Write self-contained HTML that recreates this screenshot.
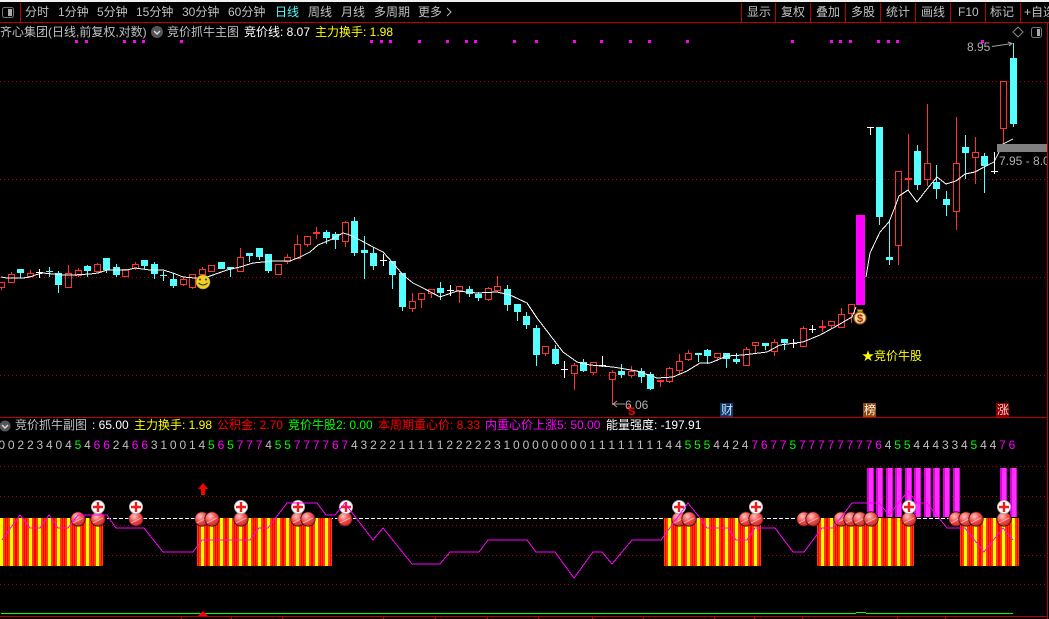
<!DOCTYPE html>
<html><head><meta charset="utf-8"><style>
html,body{margin:0;padding:0;background:#000;width:1049px;height:619px;overflow:hidden}
body{position:relative;font:12px/14px "Liberation Sans","WenQuanYi Zen Hei","Noto Sans CJK SC",sans-serif;color:#c0c0c0}
svg{position:absolute;left:0;top:0}
.t{position:absolute;white-space:nowrap}
.w{color:#fff}.y{color:#ff0}.r{color:#f00}.g{color:#0f0}.m{color:#f0f}.c{color:#54ffff}
#d{position:absolute;left:-3.07px;top:438px;display:flex;white-space:nowrap}
#d i{font-style:normal;width:9.543px;text-align:center;flex:none}
#d i.n{color:#0f0}#d i.m{color:#f0f}
</style></head><body>
<svg id="s" width="1049" height="619" viewBox="0 0 1049 619" shape-rendering="crispEdges">
<defs>
<radialGradient id="b" cx=".38" cy=".32" r=".8"><stop offset="0" stop-color="#ffc8c0"/><stop offset=".45" stop-color="#f05050"/><stop offset="1" stop-color="#c01818"/></radialGradient>
<radialGradient id="p" cx=".5" cy=".5" r=".5"><stop offset="0" stop-color="#fff"/><stop offset=".8" stop-color="#fff"/><stop offset="1" stop-color="#999"/></radialGradient>
</defs>
<rect x="0" y="0" width="1049" height="2" fill="#f0f0f0"/>
<g fill="#c00000">
<rect x="0" y="22" width="1049" height="1"/><rect x="20" y="3" width="1" height="19"/>
<rect x="741" y="3" width="1" height="19"/><rect x="775" y="3" width="1" height="19"/><rect x="810" y="3" width="1" height="19"/><rect x="845" y="3" width="1" height="19"/><rect x="880" y="3" width="1" height="19"/><rect x="915" y="3" width="1" height="19"/><rect x="950" y="3" width="1" height="19"/><rect x="985" y="3" width="1" height="19"/><rect x="1020" y="3" width="1" height="19"/>
<rect x="0" y="417" width="1048" height="1"/><rect x="0" y="616" width="1048" height="1"/><rect x="1047" y="22" width="1" height="597"/>
</g>
<g stroke="#b00000" stroke-dasharray="1 3" fill="none">
<path d="M0 81.5H1047M0 179.5H1047M0 277.5H1047M0 375.5H1047M0 466.5H1047M0 496.5H1047M0 525.5H1047M0 555.5H1047M0 584.5H1047"/>
</g>
<g id="sq" fill="#f0f"></g>
<g id="cd"></g>
<polyline fill="none" stroke="#fff" points="1,277 7,278 23,278 30,277 35,275 43,273 53,274 63,275 73,275 90,274 98,273 107,270 127,270 135,268 150,270 163,270 173,273 183,277 195,278 207,277 213,275 227,270 240,267 253,263 273,261 290,261 300,257 310,252 318,245 330,240 343,233 350,235 360,240 373,247 383,252 393,263 403,275 413,283 423,288 440,297 457,291 477,293 497,292 510,295 527,303 537,318 550,335 563,352 577,362 590,365 613,367 637,371 657,378 673,377 687,371 700,363 710,363 727,356 743,355 767,352 780,345 803,342 820,335 833,328 852,317 856,307"/>
<polyline fill="none" stroke="#fff" points="866,277 870,253 880,232 889,222 895,207 899,196 908,190 917,202 927,189 937,177 946,184 956,181 965,174 975,172 984,167 994,162 1003,144 1013,139"/>
<path d="M107 518.500H1000" stroke="#fff" stroke-dasharray="4 2" fill="none"/>
<g id="sub"></g>
<g id="blk"></g>
<g id="bal" shape-rendering="auto"></g>
<polyline fill="none" stroke="#f0f" points="2,540 20,515 30,528 40,528 49,515 58,528 68,528 78,515 87,515 107,515 116,528 144,528 163,552 193,552 202,540 250,540 259,528 268,528 287,503 317,503 326,515 335,515 345,503 350,510 373,540 383,528 412,564 440,564 450,552 479,552 488,540 527,540 536,552 555,552 574,578 593,552 602,552 612,564 632,540 661,540 688,503 700,518 707,528 728,528 736,540 747,540 755,528 775,528 793,552 804,552 822,528 833,528 852,503 879,503 889,515 908,491 917,503 927,503 947,528 965,528 984,552 1003,528 1013,540"/>
<g fill="#0f0"><rect x="1" y="613" width="855" height="1"/><rect x="856" y="612" width="10" height="1"/><rect x="866" y="613" width="147" height="1"/></g>
<path d="M203 611l5 5h-10z" fill="#f00" shape-rendering="auto"/>
<path d="M203 483l5 6h-3v6h-4v-6h-3z" fill="#f00" shape-rendering="auto"/>
<g fill="#c00000"><rect x="181" y="617" width="1" height="2"/><rect x="231" y="617" width="1" height="2"/><rect x="282" y="617" width="1" height="2"/><rect x="383" y="617" width="1" height="2"/><rect x="435" y="617" width="1" height="2"/><rect x="487" y="617" width="1" height="2"/><rect x="538" y="617" width="1" height="2"/><rect x="592" y="617" width="1" height="2"/><rect x="643" y="617" width="1" height="2"/><rect x="714" y="617" width="1" height="2"/><rect x="754" y="617" width="1" height="2"/><rect x="802" y="617" width="1" height="2"/><rect x="897" y="617" width="1" height="2"/><rect x="945" y="617" width="1" height="2"/></g>
<g shape-rendering="auto">
<rect x="2.500" y="7.500" width="11" height="10" rx="2" fill="none" stroke="#777"/><rect x="8" y="9" width="4" height="7" fill="#aaa"/>
<rect x="1031.500" y="27.500" width="10" height="10" rx="2" fill="none" stroke="#777"/><rect x="1037" y="29" width="3" height="7" fill="#aaa"/>
<path d="M1018 27l5 5-5 5-5-5z" fill="none" stroke="#888"/>
<circle cx="157" cy="32" r="6" fill="#555"/><path d="M154 31l3 3 3-3" fill="none" stroke="#ddd" stroke-width="1.400"/>
<circle cx="5" cy="426" r="5.500" fill="#555"/><path d="M2 425l3 3 3-3" fill="none" stroke="#ddd" stroke-width="1.400"/>
<circle cx="203" cy="282" r="7" fill="#f0d020" stroke="#a89010" stroke-width=".6"/><circle cx="200" cy="279.500" r="1" fill="#333"/><circle cx="206" cy="279.500" r="1" fill="#333"/><path d="M198.500 283q4.500 4 9 0" fill="none" stroke="#333"/>
<rect x="857.500" y="309.500" width="5" height="3" fill="#e8a020" stroke="#7a4a10"/>
<circle cx="860" cy="318" r="6" fill="#f4dc90" stroke="#8a5a10" stroke-width="1.200"/>
<text x="860" y="322" text-anchor="middle" font-size="11" font-weight="bold" font-family="Liberation Sans" fill="#a82010">$</text>
<path d="M992 46.500L1012 43.500M1008 42l4 1.500-3 2.500" fill="none" stroke="#a0a0a0"/>
<path d="M625 404H613M617 401l-4 3 4 3" fill="none" stroke="#a0a0a0"/>
<path d="M629 405l3 4h-6z" fill="#f00"/>
<path d="M447 8l4 4-4 4" fill="none" stroke="#bbb"/>
</g>
<rect x="997" y="144" width="50" height="8" fill="#808080"/>
<rect x="720" y="403" width="13" height="14" fill="#0a3a6e"/><rect x="863" y="403" width="13" height="14" fill="#8a4a10"/><rect x="996" y="403" width="13" height="14" fill="#8a0000"/>
</svg>
<div class="t" style="left:25px;top:5px">分时</div><div class="t" style="left:58px;top:5px">1分钟</div><div class="t" style="left:97px;top:5px">5分钟</div><div class="t" style="left:136px;top:5px">15分钟</div><div class="t" style="left:182px;top:5px">30分钟</div><div class="t" style="left:228px;top:5px">60分钟</div>
<div class="t c" style="left:275px;top:5px">日线</div><div class="t" style="left:308px;top:5px">周线</div><div class="t" style="left:341px;top:5px">月线</div><div class="t" style="left:374px;top:5px">多周期</div><div class="t" style="left:418px;top:5px">更多</div>
<div class="t" style="left:747px;top:5px">显示</div><div class="t" style="left:781px;top:5px">复权</div><div class="t" style="left:816px;top:5px">叠加</div><div class="t" style="left:851px;top:5px">多股</div><div class="t" style="left:886px;top:5px">统计</div><div class="t" style="left:921px;top:5px">画线</div><div class="t" style="left:958px;top:5px">F10</div><div class="t" style="left:990px;top:5px">标记</div><div class="t" style="left:1024px;top:5px">+自选</div>
<div class="t" style="left:0;top:25px">齐心集团(日线,前复权,对数)</div>
<div class="t" style="left:167px;top:25px">竞价抓牛主图</div><div class="t w" style="left:244px;top:25px">竞价线: 8.07</div><div class="t y" style="left:315px;top:25px">主力换手: 1.98</div>
<div class="t" style="left:967px;top:40px;color:#b0b0b0">8.95</div>
<div class="t" style="left:999px;top:154px;width:48px;overflow:hidden;color:#b0b0b0">7.95 - 8.05</div>
<div class="t" style="left:625px;top:398px;color:#b0b0b0">6.06</div>
<div class="t" style="left:628px;top:405px;color:#f00;font-size:11px;font-weight:bold">S</div>
<div class="t y" style="left:862px;top:349px">★竞价牛股</div>
<div class="t" style="left:721px;top:403px;color:#cde">财</div><div class="t" style="left:864px;top:403px;color:#fed">榜</div><div class="t" style="left:997px;top:403px;color:#fcc">涨</div>
<div class="t" style="left:15px;top:418px">竞价抓牛副图</div><div class="t w" style="left:92px;top:418px">: 65.00</div><div class="t y" style="left:134px;top:418px">主力换手: 1.98</div><div class="t r" style="left:217px;top:418px">公积金: 2.70</div><div class="t g" style="left:288px;top:418px">竞价牛股2: 0.00</div><div class="t r" style="left:378px;top:418px">本周期重心价: 8.33</div><div class="t m" style="left:485px;top:418px">内重心价上涨5: 50.00</div><div class="t w" style="left:606px;top:418px">能量强度: -197.91</div>
<div id="d"><i>0</i><i>0</i><i>2</i><i>2</i><i>3</i><i>4</i><i>0</i><i>4</i><i class=n>5</i><i>4</i><i class=m>6</i><i class=m>6</i><i>2</i><i>4</i><i class=m>6</i><i class=m>6</i><i>3</i><i>1</i><i>0</i><i>0</i><i>1</i><i>4</i><i class=n>5</i><i class=m>6</i><i class=n>5</i><i class=m>7</i><i class=m>7</i><i class=m>7</i><i>4</i><i class=n>5</i><i class=n>5</i><i class=m>7</i><i class=m>7</i><i class=m>7</i><i class=m>7</i><i class=m>6</i><i class=m>7</i><i>4</i><i>3</i><i>2</i><i>2</i><i>2</i><i>1</i><i>1</i><i>1</i><i>1</i><i>1</i><i>2</i><i>2</i><i>2</i><i>2</i><i>2</i><i>3</i><i>1</i><i>0</i><i>0</i><i>0</i><i>0</i><i>0</i><i>0</i><i>0</i><i>0</i><i>1</i><i>1</i><i>1</i><i>1</i><i>1</i><i>1</i><i>1</i><i>1</i><i>4</i><i>4</i><i class=n>5</i><i class=n>5</i><i class=n>5</i><i>4</i><i>4</i><i>2</i><i>4</i><i class=m>7</i><i class=m>6</i><i class=m>7</i><i class=m>7</i><i class=n>5</i><i class=m>7</i><i class=m>7</i><i class=m>7</i><i class=m>7</i><i class=m>7</i><i class=m>7</i><i class=m>7</i><i class=m>7</i><i class=m>6</i><i>4</i><i class=n>5</i><i class=n>5</i><i>4</i><i>4</i><i>4</i><i>3</i><i>3</i><i>4</i><i class=n>5</i><i>4</i><i>4</i><i class=m>7</i><i class=m>6</i></div>
<script>
var X=function(i){return Math.floor(1.7+9.543*i)};
function R(x,y,w,h,c){return '<rect x="'+x+'" y="'+y+'" width="'+w+'" height="'+h+'" fill="'+c+'"/>'}
var RED='#ff3232',CY='#54ffff',WH='#fff',o='';
var i=0;
function add(base,l){l.forEach(function(c){var t=c[0],x=X(i),f=function(z){return Math.round(base+z/3)};
 var a=f(c[1]),b=f(c[2]),h=c[3]?f(c[3]):a,lo=c[4]?f(c[4]):b;
 var col=t=='r'||t=='R'?RED:t=='c'||t=='C'?CY:t=='w'?WH:'#f0f';
 if(t=='M'){o+=R(x-4,a,9,b-a,'#f0f');i++;return}
 if(h<a)o+=R(x,h,1,a-h,col);
 if(lo>b)o+=R(x,b,1,lo-b,col);
 if(t=='r'){o+=R(x-3,a,7,1,col)+R(x-3,b,7,1,col)+R(x-3,a,1,b-a,col)+R(x+3,a,1,b-a+1,col)}
 else if(t=='c'){o+=R(x-3,a,7,Math.max(b-a,2),col)}
 else if(t=='R'){o+=R(x-3,a,7,2,col)}
 else if(t=='T'){o+=R(x-3,a,7,1,WH)+R(x,a,1,b-a,WH)}
 else{o+=R(x-3,a,7,1,col)}
 i++})}
add(200,[['r',245,260,0,270],['r',222,245,217,249],['c',207,219,0,235],['r',219,229,210,232],['w',215,215,207,235],['C',213,213,202,232],['c',219,255,213,279],['r',219,261,195,0],['r',210,225,204,232],['c',198,214,195,231],['r',192,213,189,216],['c',174,210,0,219],['c',201,225,192,231],['r',207,228,0,0],['r',192,204,186,210],['c',180,198,0,207],['c',192,222,186,237],['C',225,225,213,243],['c',237,258,219,264],['r',237,251,231,258],['r',222,261,0,267],['r',207,221,201,0],['r',195,212,0,0],['c',186,207,0,0],['c',201,208,0,231],['r',171,212,144,0],['c',159,167,0,186],['c',144,171,0,180],['c',162,213,0,219],['r',192,221,0,0],['r',171,183,162,192],['r',132,174,105,0],['r',108,132,0,141],['R',95,95,81,117],['c',96,114,90,132],['c',102,120,96,147],['r',66,122,63,141]]);
add(200,[['c',63,159,51,168],['c',150,159,108,237],['c',159,198,141,210],['w',180,180,162,198],['c',183,225,0,267],['c',219,321,0,333],['r',304,324,279,336],['r',280,296,0,324],['r',268,279,0,294],['c',264,279,246,300],['w',270,270,255,288],['r',259,270,0,309],['c',267,282,258,291],['c',282,294,276,303],['r',265,297,261,303],['r',259,270,228,276],['c',267,315,255,333],['c',312,336,0,363],['c',348,375,336,387],['c',384,465,375,498],['r',439,458,0,468],['c',447,492,435,495],['w',507,507,483,534],['r',495,519,489,570],['c',486,513,477,516],['r',487,515,0,525],['w',495,495,468,501],['r',516,536,510,615],['c',513,525,492,534],['r',514,525,498,534],['c',513,531,504,549],['c',522,567,516,570],['R',540,546,0,561],['r',504,542,501,549],['r',484,510,462,525],['r',460,476,450,483],['c',459,465,0,486]]);
add(40,[['c',930,948,927,972],['r',939,950,0,963],['c',939,957,0,984],['c',957,966,939,972],['r',928,974,921,0],['r',907,916,0,939],['c',909,918,0,930],['r',907,932,897,948],['c',897,909,0,930],['w',909,909,897,924],['r',865,917,858,0],['w',867,867,855,879],['R',857,857,840,876],['r',844,856,0,868],['r',823,860,804,0],['r',793,818,0,849],['M',525,795,0,0],['T',261,285,0,0],['c',261,531,0,555],['c',651,660,540,675],['r',394,614,0,675],['R',414,419,282,450],['c',333,435,315,450],['r',370,416,192,438],['c',426,447,375,477],['c',477,495,453,528],['r',370,512,231,570],['c',321,339,285,417],['r',337,350,291,432],['c',348,378,339,459],['w',393,393,336,402],['r',124,263,0,312],['c',54,252,9,261]]);
document.getElementById('cd').innerHTML=o;
var sq=[76,86,124,134,143,181,371,381,390,419,447,466,475,514,536,574,601,630,649,687,792,831,840,850,878,888,897,982],q='';
sq.forEach(function(x){q+=R(x-1,40,3,3,'#f0f')});document.getElementById('sq').innerHTML=q;
var s='';
[[0,10],[21,34],[70,79],[86,95],[101,106]].forEach(function(r){
 var L=r[0]==0?0:X(r[0])-5,E=X(r[1])+6;
 s+=R(L,518,E-L,48,'#ff3c00');
 for(var n=r[0];n<=r[1];n++){var x=X(n);
  if(x-4>=0)s+=R(x-4,518,1,48,'#f00');
  s+=R(x+4,518,1,48,'#f00')+R(x-1,518,3,48,'#ff0')}});
document.getElementById('sub').innerHTML=s;
var m='';
[91,92,93,94,95,96,97,98,99,100,105,106].forEach(function(n){var x=X(n);m+=R(x-3,468,7,49,'#e000e0')+R(x-1,468,4,49,'#ff30ff')});
document.getElementById('blk').innerHTML=m;
var b='';
[78,98,136,202,212,241,298,308,345,679,689,746,756,804,813,841,851,860,871,909,956,966,976,1004].forEach(function(x){
 b+='<circle cx="'+x+'" cy="519" r="7.200" fill="url(#b)" stroke="#301010" stroke-width=".8"/><path d="M'+(x-5)+' 523L'+(x+5)+' 518" stroke="#ffb8b8" stroke-width=".9" fill="none"/>'});
[98,136,241,298,346,679,756,909,1004].forEach(function(x){
 b+='<circle cx="'+x+'" cy="507" r="7" fill="url(#p)"/><path d="M'+(x-5)+' 507H'+(x+5)+'M'+x+' 502V512" stroke="#f01c1c" stroke-width="2.400" fill="none"/>'});
document.getElementById('bal').innerHTML=b;
</script>
</body></html>
